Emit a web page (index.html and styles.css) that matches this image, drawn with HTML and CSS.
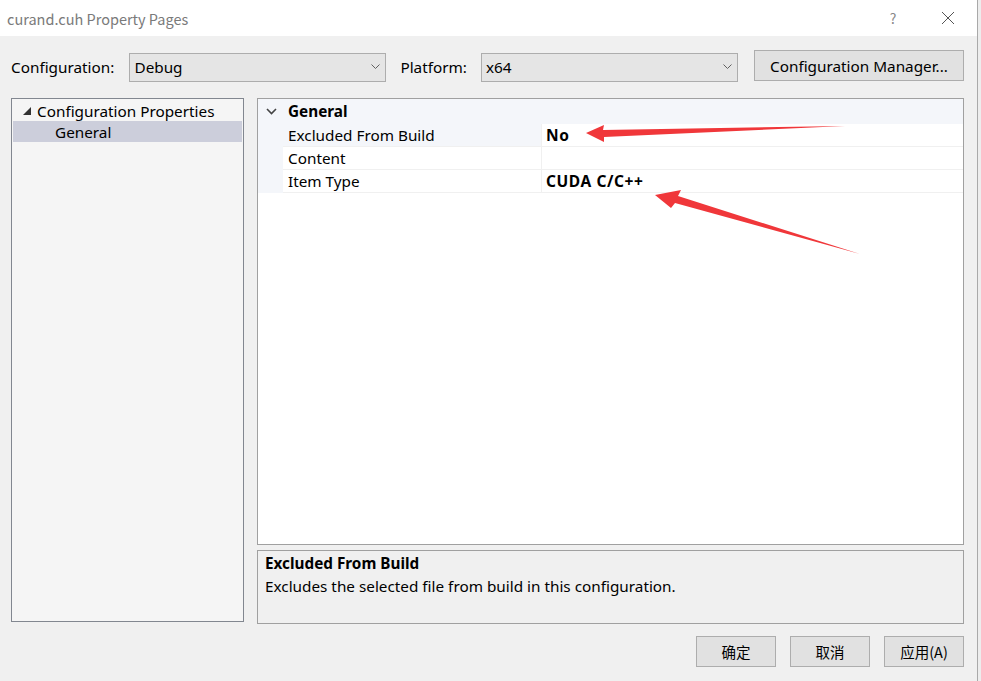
FILE: index.html
```html
<!DOCTYPE html>
<html>
<head>
<meta charset="utf-8">
<link rel="stylesheet" href="styles.css">
</head>
<body>
<div class="screen">
  <div class="window">
    <div class="titlebar">
      <span class="title">curand.cuh Property Pages</span>
      <span class="tb-help">?</span>
      <span class="tb-close"><svg width="14" height="14" viewBox="0 0 14 14"><path d="M1 1L13 13M13 1L1 13" stroke="#555" stroke-width="1" fill="none"/></svg></span>
    </div>
    <div class="body">
      <div class="toolbar">
        <span class="lbl">Configuration:</span>
        <div class="select sel1"><span>Debug</span><svg class="chev" width="9" height="6" viewBox="0 0 9 6"><path d="M0.5 0.5L4.5 4.5L8.5 0.5" stroke="#606060" fill="none"/></svg></div>
        <span class="lbl lbl2">Platform:</span>
        <div class="select sel2"><span>x64</span><svg class="chev" width="9" height="6" viewBox="0 0 9 6"><path d="M0.5 0.5L4.5 4.5L8.5 0.5" stroke="#606060" fill="none"/></svg></div>
        <div class="btn cfgbtn">Configuration Manager...</div>
      </div>
      <div class="main">
        <div class="tree">
          <div class="tree-item root"><svg class="tri" width="8" height="8" viewBox="0 0 8 8"><path d="M8 0L8 8L0 8Z" fill="#333"/></svg><span>Configuration Properties</span></div>
          <div class="tree-item child selected"><span>General</span></div>
        </div>
        <div class="rightcol">
          <div class="grid">
            <div class="cat"><svg class="catchev" width="11" height="7" viewBox="0 0 11 7"><path d="M1 1L5.5 5.5L10 1" stroke="#444" stroke-width="1.6" fill="none"/></svg><span>General</span></div>
            <div class="row sel"><div class="gut"></div><div class="name">Excluded From Build</div><div class="val">No</div></div>
            <div class="row"><div class="gut"></div><div class="name">Content</div><div class="val"></div></div>
            <div class="row"><div class="gut"></div><div class="name">Item Type</div><div class="val">CUDA C/C++</div></div>
            <div class="rest"></div>
          </div>
          <div class="desc">
            <div class="desc-title">Excluded From Build</div>
            <div class="desc-text">Excludes the selected file from build in this configuration.</div>
          </div>
        </div>
      </div>
      <div class="buttons">
        <div class="btn dbtn">确定</div>
        <div class="btn dbtn">取消</div>
        <div class="btn dbtn">应用(A)</div>
      </div>
    </div>
  </div>
  <div class="edge"></div>
</div>
<svg class="arrows" width="981" height="681" viewBox="0 0 981 681">
  <path d="M586 133 L604 125 L603 130 L845 126 L604 137 L604 142 Z" fill="#f0373a"/>
  <path d="M655 195 L681 190 L678 196 L860 254 L675 203 L671 208 Z" fill="#f0373a"/>
</svg>
</body>
</html>
```

FILE: styles.css
```css
html, body {
  margin: 0;
  padding: 0;
}
body {
  width: 981px;
  height: 681px;
  overflow: hidden;
  font-family: "Noto Sans", "Noto Sans CJK SC", sans-serif;
  font-size: 15.3px;
  color: #000;
  position: relative;
  background: #f0f0f0;
}
.screen {
  display: flex;
  height: 681px;
}
.window {
  width: 977px;
  height: 681px;
  display: flex;
  flex-direction: column;
  background: #f0f0f0;
  border-right: 1px solid #a9a9a9;
}
.edge {
  flex: 1;
  background: #ededed;
}
.titlebar {
  height: 36px;
  background: #fff;
  display: flex;
  align-items: center;
  flex-shrink: 0;
}
.title {
  margin-left: 7px;
  color: #7a7a7a;
  font-size: 14.5px;
  flex: 1;
  font-family: "Noto Sans CJK SC", sans-serif;
}
.tb-help {
  color: #888;
  font-size: 14px;
  width: 20px;
  text-align: center;
  margin-right: 38px;
  font-family: "Noto Sans CJK SC", sans-serif;
}
.tb-close {
  width: 14px;
  height: 14px;
  margin-right: 22px;
  display: flex;
}
.body {
  flex: 1;
  display: flex;
  flex-direction: column;
  padding: 0 13px 0 11px;
}
.toolbar {
  height: 62px;
  display: flex;
  align-items: center;
  flex-shrink: 0;
}
.lbl {
  width: 119px;
}
.lbl2 {
  width: 81px;
  margin-left: 14px;
}
.select {
  height: 27px;
  background: #e5e5e5;
  border: 1px solid #adadad;
  display: flex;
  align-items: center;
  justify-content: space-between;
  padding: 0 5px 0 4px;
  box-sizing: content-box;
  width: 247px;
}
.btn {
  background: #e1e1e1;
  border: 1px solid #adadad;
  display: flex;
  align-items: center;
  justify-content: center;
  box-sizing: border-box;
}
.cfgbtn {
  margin-left: 16px;
  width: 211px;
  height: 31px;
  margin-top: -3px;
}
.main {
  display: flex;
  height: 526px;
  flex-shrink: 0;
}
.tree {
  width: 233px;
  height: 524px;
  box-sizing: border-box;
  background: #f5f5f5;
  border: 1px solid #828790;
  padding: 1px 1px;
}
.tree-item {
  height: 21px;
  display: flex;
  align-items: center;
  white-space: nowrap;
}
.tree-item.root {
  padding-left: 10px;
}
.tri {
  margin-right: 6px;
}
.tree-item.child {
  padding-left: 42px;
}
.selected {
  background: #cccedb;
}
.rightcol {
  flex: 1;
  margin-left: 13px;
  display: flex;
  flex-direction: column;
}
.grid {
  height: 447px;
  box-sizing: border-box;
  border: 1px solid #a0a0a0;
  background: #fff;
  display: flex;
  flex-direction: column;
  flex-shrink: 0;
}
.cat {
  height: 25px;
  padding-bottom: 1px;
  box-sizing: border-box;
  background: #f4f6fa;
  display: flex;
  align-items: center;
  font-weight: bold;
  flex-shrink: 0;
}
.catchev {
  margin-left: 8px;
  margin-right: 11px;
}
.row {
  height: 23px;
  display: flex;
  flex-shrink: 0;
}
.gut {
  width: 25px;
  background: #f4f6fa;
  flex-shrink: 0;
}
.name {
  width: 259px;
  flex-shrink: 0;
  display: flex;
  align-items: center;
  padding-left: 5px;
  box-sizing: border-box;
  border-right: 1px solid #f0f0f0;
  border-bottom: 1px solid #f0f0f0;
}
.row.sel .name {
  background: #f4f6fa;
}
.val {
  flex: 1;
  display: flex;
  align-items: center;
  padding-left: 4px;
  font-weight: bold;
  font-size: 15.5px;
  letter-spacing: 0.6px;
  border-bottom: 1px solid #f0f0f0;
}
.rest {
  flex: 1;
}
.desc {
  margin-top: 5px;
  height: 74px;
  box-sizing: border-box;
  border: 1px solid #a0a0a0;
  background: #f0f0f0;
  padding: 2px 7px;
}
.desc-title {
  font-weight: bold;
  line-height: 20px;
}
.desc-text {
  line-height: 26px;
}
.buttons {
  display: flex;
  justify-content: flex-end;
  gap: 14px;
  margin-top: 12px;
}
.dbtn {
  width: 80px;
  height: 31px;
  font-size: 14.5px;
  font-family: "Noto Sans CJK SC", sans-serif;
}
.arrows {
  position: absolute;
  left: 0;
  top: 0;
  pointer-events: none;
}
```
